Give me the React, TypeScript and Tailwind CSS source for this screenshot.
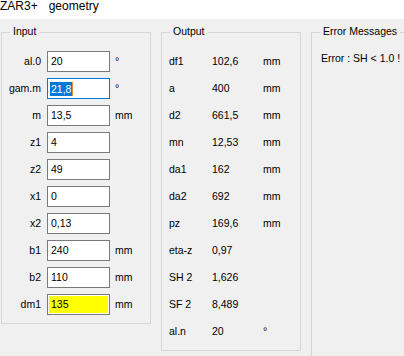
import React from "react";

type InputRow = { label: string; value: string; unit?: string; focused?: boolean; highlight?: boolean };
type OutputRow = { label: string; value: string; unit?: string };

const INPUTS: InputRow[] = [
  { label: "al.0", value: "20", unit: "°" },
  { label: "gam.m", value: "21,8", unit: "°", focused: true },
  { label: "m", value: "13,5", unit: "mm" },
  { label: "z1", value: "4" },
  { label: "z2", value: "49" },
  { label: "x1", value: "0" },
  { label: "x2", value: "0,13" },
  { label: "b1", value: "240", unit: "mm" },
  { label: "b2", value: "110", unit: "mm" },
  { label: "dm1", value: "135", unit: "mm", highlight: true },
];

const OUTPUTS: OutputRow[] = [
  { label: "df1", value: "102,6", unit: "mm" },
  { label: "a", value: "400", unit: "mm" },
  { label: "d2", value: "661,5", unit: "mm" },
  { label: "mn", value: "12,53", unit: "mm" },
  { label: "da1", value: "162", unit: "mm" },
  { label: "da2", value: "692", unit: "mm" },
  { label: "pz", value: "169,6", unit: "mm" },
  { label: "eta-z", value: "0,97" },
  { label: "SH 2", value: "1,626" },
  { label: "SF 2", value: "8,489" },
  { label: "al.n", value: "20", unit: "°" },
];

function GroupBox({ title, className, children }: { title: string; className: string; children?: React.ReactNode }) {
  return (
    <div className={`relative border border-[#d5d5d5] shrink-0 ${className}`}>
      {/* caption sits on the top border */}
      <div className="absolute top-[-8px] left-[8px] px-[3px] bg-[#f0f0f0] leading-[13px]">{title}</div>
      {children}
    </div>
  );
}

function Field({ row }: { row: InputRow }) {
  if (row.highlight) {
    return (
      <div className="w-[63px] h-[21px] border border-[#7a7a7a] bg-white p-px">
        <div className="h-full bg-[#ffff00] pl-[2px] flex items-center">{row.value}</div>
      </div>
    );
  }
  if (row.focused) {
    return (
      <div className="w-[63px] h-[21px] border border-[#0078d7] bg-white pl-[2px] flex items-center">
        <span className="inline-block bg-[#0078d7] text-white leading-[14px] px-px">{row.value}</span>
        <span className="inline-block w-px h-[14px] bg-[#f08a30]" />
      </div>
    );
  }
  return (
    <div className="w-[63px] h-[21px] border border-[#7a7a7a] bg-white pl-[3px] flex items-center">{row.value}</div>
  );
}

export default function App() {
  return (
    <div className="w-[404px] h-[356px] overflow-hidden bg-[#f0f0f0] text-[10.5px] text-black font-['Liberation_Sans',Arial,sans-serif]">
      {/* Title strip */}
      <div className="h-[19px] bg-white flex text-[12px] leading-[12px]">
        <span>ZAR3+</span>
        <span className="ml-[11px]">geometry</span>
      </div>

      <div className="flex items-start pt-[13px] pl-[1px] gap-[10px]">
        {/* Input */}
        <GroupBox title="Input" className="w-[150px] h-[292px]">
          <div className="flex flex-col gap-[6px] pt-[18px]">
            {INPUTS.map((r) => (
              <div key={r.label} className="flex items-center h-[21px]">
                <div className="w-[39px] text-right">{r.label}</div>
                <div className="ml-[6px]">
                  <Field row={r} />
                </div>
                {r.unit && <div className="ml-[5px]">{r.unit}</div>}
              </div>
            ))}
          </div>
        </GroupBox>

        {/* Output */}
        <GroupBox title="Output" className="w-[140px] h-[319px]">
          <div className="flex flex-col gap-[6px] pt-[18px] pl-[7px]">
            {OUTPUTS.map((r) => (
              <div key={r.label} className="flex items-center h-[21px]">
                <div className="w-[43px]">{r.label}</div>
                <div className="w-[51px]">{r.value}</div>
                {r.unit && <div>{r.unit}</div>}
              </div>
            ))}
          </div>
        </GroupBox>

        {/* Error messages */}
        <GroupBox title="Error Messages" className="w-[120px] h-[340px]">
          <div className="pt-[19px] pl-[9px] whitespace-pre leading-[13px]">Error : SH &lt; 1.0 !</div>
        </GroupBox>
      </div>
    </div>
  );
}
